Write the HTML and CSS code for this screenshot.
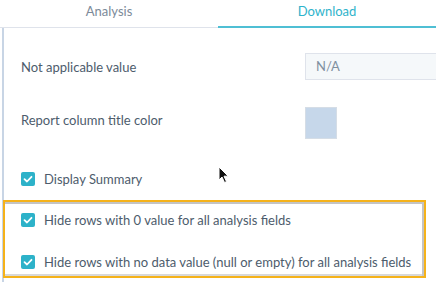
FILE: index.html
```html
<!DOCTYPE html>
<html>
<head>
<meta charset="utf-8">
<link rel="stylesheet" href="styles.css">
</head>
<body>
<div class="tabs">
  <div class="tab">Analysis</div>
  <div class="tab active">Download</div>
</div>
<div class="panel">
  <div class="row row-input">
    <span class="label">Not applicable value</span>
    <div class="input">N/A</div>
  </div>
  <div class="row row-color">
    <span class="label raised">Report column title color</span>
    <div class="swatch"></div>
  </div>
  <div class="check summary">
    <span class="box"><svg width="14" height="14" viewBox="0 0 14 14"><path d="M3.5 7.2 L6 9.5 L10.5 4.8" fill="none" stroke="#fff" stroke-width="1.8" stroke-linecap="round" stroke-linejoin="round"/></svg></span>
    <span class="text">Display Summary</span>
  </div>
  <div class="highlight">
    <div class="check">
      <span class="box"><svg width="14" height="14" viewBox="0 0 14 14"><path d="M3.5 7.2 L6 9.5 L10.5 4.8" fill="none" stroke="#fff" stroke-width="1.8" stroke-linecap="round" stroke-linejoin="round"/></svg></span>
      <span class="text">Hide rows with 0 value for all analysis fields</span>
    </div>
    <div class="check second">
      <span class="box"><svg width="14" height="14" viewBox="0 0 14 14"><path d="M3.5 7.2 L6 9.5 L10.5 4.8" fill="none" stroke="#fff" stroke-width="1.8" stroke-linecap="round" stroke-linejoin="round"/></svg></span>
      <span class="text">Hide rows with no data value (null or empty) for all analysis fields</span>
    </div>
  </div>
  <svg class="cursor" width="12" height="18" viewBox="0 0 12 18"><path d="M1 1 L1 14 L4 11 L6.5 16.5 L8.5 15.6 L6 10.2 L10.2 10.2 Z" fill="#111" stroke="#fff" stroke-width="1"/></svg>
</div>
</body>
</html>
```
FILE: styles.css
```css
html, body {
  margin: 0;
  padding: 0;
  background: #fff;
}
body {
  width: 436px;
  height: 282px;
  overflow: hidden;
  font-family: Lato, "Open Sans", sans-serif;
  font-size: 13px;
  color: #33475b;
}
.tabs {
  display: flex;
  height: 28px;
}
.tab {
  flex: 1;
  text-align: center;
  line-height: 22px;
  font-size: 13px;
  color: #7c8a99;
  border-bottom: 1px solid #dfe3eb;
  box-sizing: border-box;
}
.tab.active {
  color: #2eb3cb;
  border-bottom: 2px solid #4fbfd4;
}
.panel {
  position: relative;
  margin-left: 2px;
  border-left: 2px solid #c8d5e5;
  padding-left: 17px;
  padding-top: 25px;
  height: 254px;
  box-sizing: border-box;
}
.row {
  display: flex;
  align-items: center;
}
.label {
  width: 284px;
  color: #4d5c6c;
}
.label.raised {
  margin-top: -6px;
}
.row-input {
  height: 27px;
}
.input {
  flex: 1;
  height: 27px;
  box-sizing: border-box;
  border: 1px solid #dfe3eb;
  border-right: none;
  background: #f5f8fa;
  padding-left: 10px;
  line-height: 25px;
  color: #8090a0;
}
.row-color {
  margin-top: 27px;
  height: 32px;
}
.swatch {
  width: 32px;
  height: 32px;
  box-sizing: border-box;
  background: #c6d7ea;
  border: 1px solid #d5dde6;
}
.check {
  display: flex;
  align-items: center;
  height: 14px;
}
.summary {
  margin-top: 33px;
}
.box {
  width: 14px;
  height: 14px;
  border-radius: 2px;
  background: #2db2c9;
  display: flex;
  flex-shrink: 0;
}
.text {
  margin-left: 9px;
  color: #4d5c6c;
  white-space: nowrap;
}
.highlight {
  margin-top: 14px;
  margin-left: -18px;
  width: 423px;
  height: 78px;
  box-sizing: border-box;
  border: 2px solid #f5b21a;
  box-shadow: inset -2px 2px 0 #c4c4c4, inset 0 -2px 0 #d8d8d8;
  padding: 11px 0 0 16px;
}
.second {
  margin-top: 28px;
}
.cursor {
  position: absolute;
  left: 214px;
  top: 138px;
}
```
